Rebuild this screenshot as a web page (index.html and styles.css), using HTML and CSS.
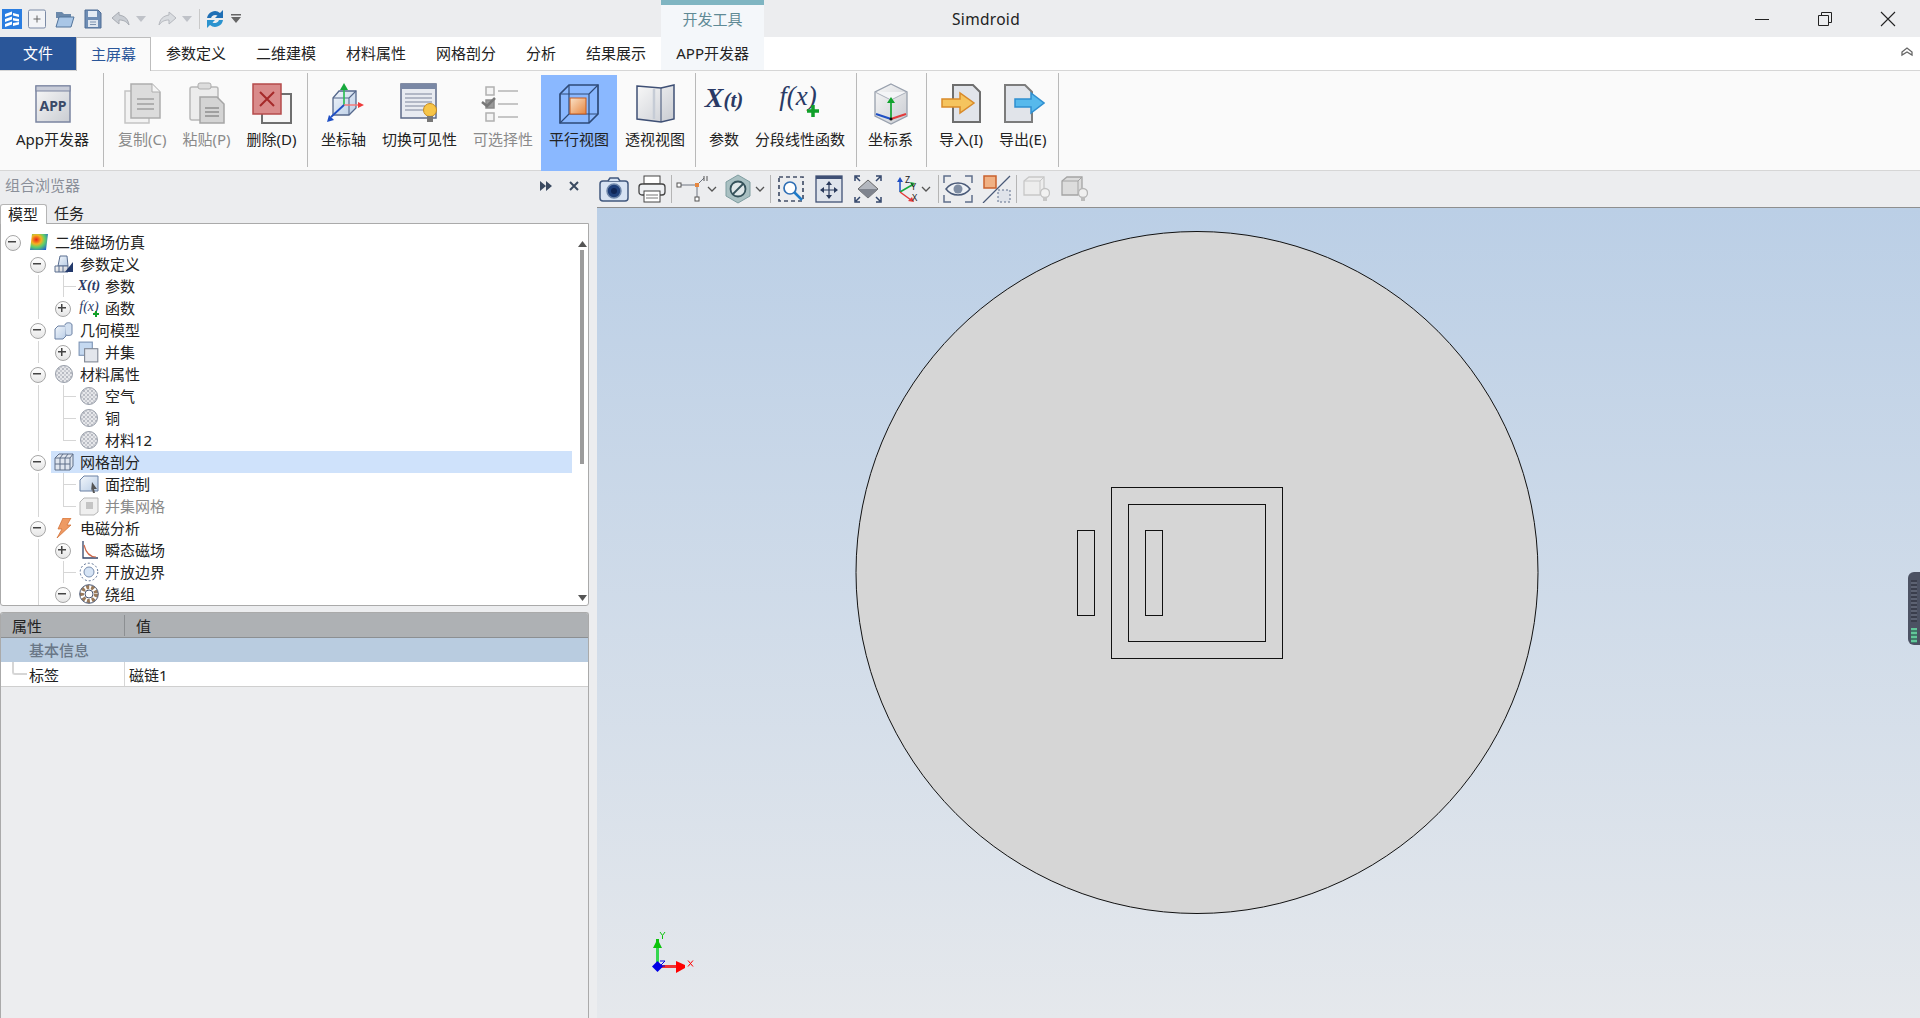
FILE: index.html
```html
<!DOCTYPE html>
<html lang="zh">
<head>
<meta charset="utf-8">
<title>Simdroid</title>
<link rel="stylesheet" href="styles.css">
</head>
<body>
<svg class="defs" width="0" height="0" aria-hidden="true">
  <defs>
    <linearGradient id="gBlue" x1="0" y1="0" x2="1" y2="1"><stop offset="0" stop-color="#f2f6fb"/><stop offset="1" stop-color="#b9cde6"/></linearGradient>
    <linearGradient id="gGray" x1="0" y1="0" x2="1" y2="1"><stop offset="0" stop-color="#f8f8f8"/><stop offset="1" stop-color="#c9ccd2"/></linearGradient>
    <linearGradient id="gOrange" x1="0" y1="0" x2="1" y2="1"><stop offset="0" stop-color="#fbe3c8"/><stop offset="1" stop-color="#e6853f"/></linearGradient>
    <radialGradient id="gHeat" cx="0.35" cy="0.35" r="0.8"><stop offset="0" stop-color="#e8231c"/><stop offset="0.35" stop-color="#f5b21f"/><stop offset="0.6" stop-color="#5fd06a"/><stop offset="1" stop-color="#1f5fd0"/></radialGradient>
    <pattern id="pDots" width="4" height="4" patternUnits="userSpaceOnUse"><rect width="4" height="4" fill="#e6e7ea"/><circle cx="1" cy="1" r="1" fill="#a9adb6"/><circle cx="3" cy="3" r="1" fill="#bfc2c9"/></pattern>
    <symbol id="sphere" viewBox="0 0 20 20"><circle cx="10" cy="10" r="8.5" fill="url(#pDots)" stroke="#9aa0ab"/></symbol>
    <symbol id="chev" viewBox="0 0 12 12"><path d="M2 4l4 4 4-4" fill="none" stroke="#555" stroke-width="1.3"/></symbol>
  </defs>
</svg>

<header class="titlebar">
  <div class="quick">
    <svg class="q q-first" width="20" height="20" viewBox="0 0 20 20"><rect width="20" height="20" fill="#2a7de1"/><path d="M3 5l7-2.5v3L3 8zM3 10l7-2.5v3L3 13zM3 15l7-2.5v3L3 18zM11 4l6 1.5v2.500L11 6.500zM11 9l6 1v2.500l-6-1zM11 14l6-1v2.500l-6 1.500z" fill="#fff"/></svg>
    <svg class="q" width="20" height="20" viewBox="0 0 20 20"><rect x="1.500" y="1" width="17" height="18" rx="1.500" fill="#f3f4f7" stroke="#7c8ba6"/><path d="M6.500 10h7M10 6.500v7" stroke="#666" fill="none"/></svg>
    <svg class="q" width="20" height="20" viewBox="0 0 20 20"><path d="M1 3h6l2 2h7v4H1z" fill="#6b89ab"/><path d="M1 18l3-10h15l-3 10z" fill="#a9c6e6" stroke="#52749b"/></svg>
    <svg class="q" width="20" height="20" viewBox="0 0 20 20"><path d="M2 1h13l3 3v15H2z" fill="#6e8db5" stroke="#4f6c94"/><rect x="5" y="2" width="9" height="6" fill="#e4ebf4"/><rect x="5" y="11" width="10" height="7" fill="#dfe6ef"/><path d="M7 13h6M7 15.500h6" stroke="#7d93b0"/></svg>
    <svg class="q" width="20" height="20" viewBox="0 0 20 20"><path d="M8 3L1 9l7 6v-4c4 0 7 1 10 5-1-6-4-9-10-10z" fill="#c9cdd3" stroke="#a8acb3"/></svg>
    <svg class="qa" width="10" height="6" viewBox="0 0 10 6"><path d="M0 0h10L5 6z" fill="#bfc2c8"/></svg>
    <svg class="q" width="20" height="20" viewBox="0 0 20 20"><path d="M12 3l7 6-7 6v-4C8 11 5 12 2 16c1-6 4-9 10-10z" fill="#d9dce0" stroke="#b5b8be"/></svg>
    <svg class="qa" width="10" height="6" viewBox="0 0 10 6"><path d="M0 0h10L5 6z" fill="#bfc2c8"/></svg>
    <span class="qsep"></span>
    <svg class="q" width="20" height="20" viewBox="0 0 20 20"><path d="M2 9a8 8 0 0 1 13-5L18 1v8h-8l2.500-2.500A4.500 4.500 0 0 0 6 9z" fill="#1f6fb5"/><path d="M18 11a8 8 0 0 1-13 5l-3 3v-8h8l-2.500 2.500A4.500 4.500 0 0 0 14 11z" fill="#2b93cf"/></svg>
    <svg class="qm" width="10" height="9" viewBox="0 0 10 9"><path d="M0 0h10v1.500H0zM0 3h10L5 9z" fill="#666"/></svg>
  </div>
  <div class="ctx-head"><span>开发工具</span></div>
  <div class="app-title">Simdroid</div>
  <div class="win">
    <svg width="16" height="16" viewBox="0 0 16 16"><path d="M1 8.500h14" stroke="#222" fill="none"/></svg>
    <svg width="16" height="16" viewBox="0 0 16 16"><path d="M1.500 4.500h10v10h-10zM4.500 4.500v-3h10v10h-3" stroke="#222" fill="none"/></svg>
    <svg width="16" height="16" viewBox="0 0 16 16"><path d="M1 1l14 14M15 1L1 15" stroke="#222" fill="none" stroke-width="1.100"/></svg>
  </div>
</header>

<nav class="tabs">
  <div class="tab file">文件</div>
  <div class="tab active">主屏幕</div>
  <div class="tab">参数定义</div>
  <div class="tab">二维建模</div>
  <div class="tab">材料属性</div>
  <div class="tab">网格剖分</div>
  <div class="tab">分析</div>
  <div class="tab">结果展示</div>
  <div class="tab ctx">APP开发器</div>
  <svg class="collapse" width="14" height="12" viewBox="0 0 14 12"><path d="M2 6l5-4 5 4v3L7 6 2 9z" fill="none" stroke="#666" stroke-width="1.300"/></svg>
</nav>

<section class="ribbon">
  <div class="group g-app">
    <div class="rb">
      <svg width="44" height="44" viewBox="0 0 44 44"><rect x="5" y="5" width="34" height="36" fill="url(#gGray)" stroke="#7a84a0" stroke-width="1.500"/><rect x="5" y="5" width="34" height="5" fill="#c8ccd8" stroke="#7a84a0"/><text x="22" y="30" class="svg-app">APP</text></svg>
      <span>App开发器</span>
    </div>
  </div>
  <div class="group g-edit">
    <div class="rb off">
      <svg width="44" height="44" viewBox="0 0 44 44"><path d="M5 10h24v32H5z" fill="#f2f2f2" stroke="#c4c4c4" stroke-width="1.500"/><path d="M11 3h21l8 8v26H11z" fill="#dcdcdc" stroke="#adadad" stroke-width="1.500"/><path d="M32 3v8h8" fill="#f5f5f5" stroke="#adadad"/><path d="M17 18h17M17 23h17M17 28h17" stroke="#a0a0a0" stroke-width="1.500"/></svg>
      <span>复制(C)</span>
    </div>
    <div class="rb off">
      <svg width="44" height="44" viewBox="0 0 44 44"><rect x="5" y="6" width="28" height="33" rx="2" fill="#ececec" stroke="#b8b8b8" stroke-width="1.500"/><rect x="13" y="2" width="13" height="6" rx="2" fill="#dcdcdc" stroke="#adadad"/><path d="M15 16h17l7 7v19H15z" fill="#d4d4d4" stroke="#a5a5a5" stroke-width="1.500"/><path d="M20 27h14M20 31h14M20 35h14" stroke="#8f8f8f" stroke-width="1.300"/></svg>
      <span>粘贴(P)</span>
    </div>
    <div class="rb">
      <svg width="44" height="44" viewBox="0 0 44 44"><rect x="12" y="13" width="29" height="29" fill="#f6f6f6" stroke="#6f6f6f" stroke-width="2"/><rect x="3" y="3" width="28" height="30" fill="#d98b8b" stroke="#b54b4b" stroke-width="1.500"/><path d="M10 11l14 14M24 11L10 25" stroke="#a52a2a" stroke-width="2" fill="none"/></svg>
      <span>删除(D)</span>
    </div>
  </div>
  <div class="group g-view">
    <div class="rb">
      <svg width="44" height="44" viewBox="0 0 44 44"><path d="M11 17l6-7h17v17l-7 7H11z" fill="url(#gBlue)" stroke="#55688c" stroke-width="1.300"/><path d="M11 17h16v17M27 17l7-7" fill="none" stroke="#55688c" stroke-width="1.100"/><path d="M22 24V8" stroke="#2fbf57" stroke-width="1.700"/><path d="M18 9l4-7 4 7z" fill="#16a83c"/><path d="M22 24h14" stroke="#f47a7a" stroke-width="1.500"/><path d="M36 21l6 3-6 3z" fill="#ee3b3b"/><path d="M22 24L9 36" stroke="#1f4fc4" stroke-width="1.800"/><path d="M5 41l2-7 5 5z" fill="#1f4fc4"/></svg>
      <span>坐标轴</span>
    </div>
    <div class="rb">
      <svg width="44" height="44" viewBox="0 0 44 44"><rect x="3" y="3" width="35" height="34" fill="#e8ebf1" stroke="#5c6a88" stroke-width="1.500"/><rect x="3" y="3" width="35" height="5" fill="#7a88a5"/><path d="M7 13h27M7 17h27M7 21h27M7 25h20M7 29h18" stroke="#a0a8b8" stroke-width="1.300"/><circle cx="32" cy="29" r="6.500" fill="#f7c548" stroke="#c48a1f"/><rect x="29" y="35" width="6" height="6" fill="#777"/></svg>
      <span>切换可见性</span>
    </div>
    <div class="rb off">
      <svg width="44" height="44" viewBox="0 0 44 44"><rect x="5" y="6" width="8" height="8" fill="#f4f4f4" stroke="#b0b0b0" stroke-width="1.500"/><rect x="5" y="19" width="8" height="8" fill="#9a9a9a" stroke="#8a8a8a" stroke-width="1.500"/><rect x="5" y="32" width="8" height="8" fill="#f4f4f4" stroke="#b0b0b0" stroke-width="1.500"/><path d="M1 21l5 4 8-8" fill="none" stroke="#777" stroke-width="2.500"/><path d="M17 10h20M17 23h20M17 36h20" stroke="#b5b5b5" stroke-width="1.500"/></svg>
      <span>可选择性</span>
    </div>
    <div class="rb sel">
      <svg width="44" height="44" viewBox="0 0 44 44"><path d="M3 13l9-9h29v29l-9 9H3z" fill="none" stroke="#2e4a78" stroke-width="1.700"/><path d="M3 13h29v29M32 13l9-9M12 4v29h29M3 42l9-9" fill="none" stroke="#2e4a78" stroke-width="1.200"/><rect x="13" y="17" width="16" height="16" fill="url(#gOrange)" stroke="#c65a1e"/></svg>
      <span>平行视图</span>
    </div>
    <div class="rb">
      <svg width="44" height="44" viewBox="0 0 44 44"><path d="M4 5l24 2 13-3v34l-13 3-24-3z" fill="url(#gGray)" stroke="#3f5075" stroke-width="1.500"/><path d="M28 7v34" fill="none" stroke="#3f5075" stroke-width="1"/><path d="M21 8v30" stroke="#c6ccd6" stroke-width="2.500"/></svg>
      <span>透视视图</span>
    </div>
  </div>
  <div class="group g-par">
    <div class="rb tight">
      <svg width="44" height="44" viewBox="0 0 44 44"><text x="22" y="26" class="svg-xt">X<tspan class="svg-xt2">(t)</tspan></text></svg>
      <span>参数</span>
    </div>
    <div class="rb">
      <svg width="44" height="44" viewBox="0 0 44 44"><text x="20" y="24" class="svg-fx">f(x)</text><path d="M29 30h12M35 24v12" stroke="#10a02a" stroke-width="3.500"/></svg>
      <span>分段线性函数</span>
    </div>
  </div>
  <div class="group g-cs">
    <div class="rb">
      <svg width="44" height="44" viewBox="0 0 44 44"><path d="M22 3l16 8v24l-16 8-16-8V11z" fill="url(#gGray)" stroke="#98a0ad" stroke-width="1.300"/><path d="M6 11l16 8 16-8" fill="#f4f5f7" stroke="#aab0bb"/><path d="M22 37V20" stroke="#11a32e" stroke-width="1.700"/><path d="M18 22l4-6 4 6z" fill="#11a32e"/><path d="M22 38L7 33" stroke="#1f4fc4" stroke-width="2"/><path d="M22 38l15-5" stroke="#e23a3a" stroke-width="2"/><circle cx="22" cy="38" r="1.500" fill="#111"/></svg>
      <span>坐标系</span>
    </div>
  </div>
  <div class="group g-io">
    <div class="rb">
      <svg width="44" height="44" viewBox="0 0 44 44"><path d="M14 4h20l7 7v30H14z" fill="#e1e4ea" stroke="#6e6e6e" stroke-width="2"/><path d="M3 18h18v-6l14 10-14 10v-6H3z" fill="#f5c45e" stroke="#d98a2a" stroke-width="1.500"/></svg>
      <span>导入(I)</span>
    </div>
    <div class="rb">
      <svg width="44" height="44" viewBox="0 0 44 44"><path d="M4 4h20l7 7v30H4z" fill="#e1e4ea" stroke="#7c7c7c" stroke-width="2"/><path d="M14 18h16v-6l13 10-13 10v-6H14z" fill="#57b9ec" stroke="#2f8fd0" stroke-width="1.500"/></svg>
      <span>导出(E)</span>
    </div>
  </div>
</section>

<main class="main">
  <aside class="side">
    <div class="side-head">
      <span>组合浏览器</span>
      <div class="side-tools">
        <svg width="12" height="12" viewBox="0 0 12 12"><path d="M0 1l6 5-6 5zM6 1l6 5-6 5z" fill="#3a4a60"/></svg>
        <svg width="12" height="12" viewBox="0 0 12 12"><path d="M2 2l8 8M10 2l-8 8" stroke="#3a4a60" stroke-width="2"/></svg>
      </div>
    </div>
    <div class="side-tabs"><span class="stab on">模型</span><span class="stab">任务</span></div>
    <div class="tree-box">
      <div class="tree">
        <div class="row"><i class="c minus"></i><div class="lbl"><svg class="ti" width="22" height="20" viewBox="0 0 20 20"><path d="M3 2h16l-2 16H1z" fill="url(#gHeat)"/></svg><span>二维磁场仿真</span></div></div>
        <div class="row"><i class="c"></i><i class="c minus"></i><div class="lbl"><svg class="ti" width="22" height="20" viewBox="0 0 20 20"><path d="M6 2h7l1 10H4z" fill="url(#gBlue)" stroke="#5a6e90"/><path d="M1 12h13v6H1z" fill="url(#gGray)" stroke="#5a6e90"/><path d="M5 12v6M9 12v6" stroke="#5a6e90"/><path d="M19 8v10H11z" fill="#22396b"/></svg><span>参数定义</span></div></div>
        <div class="row"><i class="c"></i><i class="c v"></i><i class="c t"></i><div class="lbl"><svg class="ti" width="22" height="20" viewBox="0 0 22 20"><text x="11" y="14" class="svg-xt-s">X(t)</text></svg><span>参数</span></div></div>
        <div class="row"><i class="c"></i><i class="c v"></i><i class="c plus"></i><div class="lbl"><svg class="ti" width="22" height="20" viewBox="0 0 22 20"><text x="11" y="13" class="svg-fx-s">f(x)</text><path d="M15 16h6M18 13v6" stroke="#10a02a" stroke-width="2"/></svg><span>函数</span></div></div>
        <div class="row"><i class="c"></i><i class="c minus"></i><div class="lbl"><svg class="ti" width="22" height="20" viewBox="0 0 20 20"><path d="M1 9l3-3h8v10l-3 3H1z" fill="url(#gBlue)" stroke="#6a80a3"/><path d="M11 5c0-3 7-3 7 0v9c0 1-3 2-6 1" fill="#d3e0f0" stroke="#6a80a3"/></svg><span>几何模型</span></div></div>
        <div class="row"><i class="c"></i><i class="c v"></i><i class="c plus"></i><div class="lbl"><svg class="ti" width="22" height="22" viewBox="0 0 20 20"><rect x="1" y="1" width="12" height="12" fill="#c5d9f0" stroke="#7c93b4"/><rect x="6" y="7" width="12" height="12" fill="#e3e6ec" stroke="#808794"/></svg><span>并集</span></div></div>
        <div class="row"><i class="c"></i><i class="c minus"></i><div class="lbl"><svg class="ti" width="22" height="20"><use href="#sphere"/></svg><span>材料属性</span></div></div>
        <div class="row"><i class="c"></i><i class="c v"></i><i class="c t"></i><div class="lbl"><svg class="ti" width="22" height="20"><use href="#sphere"/></svg><span>空气</span></div></div>
        <div class="row"><i class="c"></i><i class="c v"></i><i class="c t"></i><div class="lbl"><svg class="ti" width="22" height="20"><use href="#sphere"/></svg><span>铜</span></div></div>
        <div class="row"><i class="c"></i><i class="c v"></i><i class="c l"></i><div class="lbl"><svg class="ti" width="22" height="20"><use href="#sphere"/></svg><span>材料12</span></div></div>
        <div class="row"><i class="c"></i><i class="c minus"></i><div class="lbl sel"><svg class="ti" width="22" height="20" viewBox="0 0 20 20"><path d="M1 6l4-4h14v12l-3 4H1z" fill="#dfe5ee" stroke="#5f6e88"/><path d="M1 6h15v12M16 6l3-4M6 6v12M11 6v12M1 12h15M9 2L6 6M14 2l-3 4" fill="none" stroke="#5f6e88"/></svg><span>网格剖分</span></div></div>
        <div class="row"><i class="c"></i><i class="c v"></i><i class="c t"></i><div class="lbl"><svg class="ti" width="22" height="20" viewBox="0 0 20 20"><path d="M1 6l4-4h14v15H1z" fill="url(#gBlue)" stroke="#6a80a3"/><path d="M13 8l5 7h-3l1 4-2 0-1-4-1 2z" fill="#555"/></svg><span>面控制</span></div></div>
        <div class="row off"><i class="c"></i><i class="c v"></i><i class="c l"></i><div class="lbl"><svg class="ti" width="22" height="20" viewBox="0 0 20 20"><path d="M1 6l4-4h14v14l-4 3H1z" fill="#efefef" stroke="#b5b5b5"/><rect x="7" y="6" width="7" height="7" fill="#c4c4c4"/></svg><span>并集网格</span></div></div>
        <div class="row"><i class="c"></i><i class="c minus"></i><div class="lbl"><svg class="ti" width="22" height="20" viewBox="0 0 20 20"><path d="M9 0h8l-4 7h4L3 20l5-9H4z" fill="#ee9a63" stroke="#cf6a2e" stroke-width=".7"/></svg><span>电磁分析</span></div></div>
        <div class="row"><i class="c"></i><i class="c v"></i><i class="c plus"></i><div class="lbl"><svg class="ti" width="22" height="20" viewBox="0 0 20 20"><path d="M4 1v17h15" fill="none" stroke="#34466a" stroke-width="1.300"/><path d="M5 5c2 8 6 12 12 12" fill="none" stroke="#d0694a" stroke-width="1.200"/></svg><span>瞬态磁场</span></div></div>
        <div class="row"><i class="c"></i><i class="c v"></i><i class="c t"></i><div class="lbl"><svg class="ti" width="22" height="20" viewBox="0 0 20 20"><circle cx="10" cy="10" r="5" fill="#d6e4f5" stroke="#7a8fb0"/><circle cx="10" cy="10" r="8.800" fill="none" stroke="#5a6e90" stroke-dasharray="2 2"/></svg><span>开放边界</span></div></div>
        <div class="row"><i class="c"></i><i class="c v"></i><i class="c minus"></i><div class="lbl"><svg class="ti" width="22" height="20" viewBox="0 0 20 20"><circle cx="10" cy="10" r="7" fill="none" stroke="#9a7a5a" stroke-width="4" stroke-dasharray="3 2"/><circle cx="10" cy="10" r="9.300" fill="none" stroke="#4a5670"/><circle cx="10" cy="10" r="4" fill="#fff" stroke="#4a5670"/></svg><span>绕组</span></div></div>
        <div class="row"><i class="c"></i><i class="c v"></i><i class="c v"></i><i class="c t"></i><div class="lbl"></div></div>
      </div>
      <div class="vscroll">
        <svg width="9" height="6" viewBox="0 0 9 6"><path d="M4.500 0L9 6H0z" fill="#555"/></svg>
        <div class="thumb"></div>
        <svg width="9" height="6" viewBox="0 0 9 6"><path d="M4.500 6L9 0H0z" fill="#555"/></svg>
      </div>
    </div>
    <div class="props">
      <div class="p-head"><span class="p-k">属性</span><span class="p-v">值</span></div>
      <div class="p-group">基本信息</div>
      <div class="p-row"><span class="p-k"><i class="p-guide"></i>标签</span><span class="p-v">磁链1</span></div>
    </div>
  </aside>

  <div class="stage">
    <div class="toolbar">
      <div class="tb"><svg width="30" height="28" viewBox="0 0 30 28"><rect x="1" y="6" width="28" height="20" rx="3" fill="#d7e3f3" stroke="#41587e" stroke-width="1.500"/><path d="M9 6l2-3h8l2 3" fill="#d7e3f3" stroke="#41587e" stroke-width="1.500"/><circle cx="15" cy="16" r="7" fill="#1e3f7a" stroke="#6f87aa" stroke-width="1.500"/><circle cx="15" cy="16" r="3" fill="#0f2554"/></svg></div>
      <div class="tb"><svg width="30" height="28" viewBox="0 0 30 28"><rect x="7" y="1" width="16" height="8" fill="#fff" stroke="#444"/><rect x="2" y="9" width="26" height="11" rx="3" fill="#eef0f3" stroke="#444" stroke-width="1.300"/><rect x="7" y="16" width="16" height="11" fill="#fff" stroke="#444"/><path d="M9 20h12M9 23h12" stroke="#777"/></svg></div>
      <span class="tsep"></span>
      <div class="tb-split sp1"><svg width="34" height="28" viewBox="0 0 34 28"><path d="M3 10h18M21 10V24M21 10L28 3" stroke="#6e7480" stroke-width="1" fill="none"/><rect x="1" y="8" width="4" height="4" fill="#fff" stroke="#555"/><rect x="19" y="22" width="4" height="4" fill="#fff" stroke="#555"/><rect x="19" y="8" width="4" height="4" fill="#e7873f"/><path d="M28 1v5M31 1v5" stroke="#555"/></svg><svg class="ch" width="12" height="12"><use href="#chev"/></svg></div>
      <div class="tb-split sp2"><svg width="28" height="30" viewBox="0 0 28 30"><path d="M14 1l12 7v14l-12 7-12-7V8z" fill="#a9c0c2" stroke="#7f9da0"/><circle cx="14" cy="15" r="7.500" fill="#dfe7e8" stroke="#35525a" stroke-width="1.800"/><path d="M9 20L19 10" stroke="#35525a" stroke-width="1.800"/></svg><svg class="ch" width="12" height="12"><use href="#chev"/></svg></div>
      <span class="tsep s2"></span>
      <div class="tb"><svg width="28" height="28" viewBox="0 0 28 28"><rect x="2" y="2" width="24" height="24" fill="none" stroke="#44506a" stroke-width="1.700" stroke-dasharray="4 3"/><circle cx="13" cy="13" r="6" fill="#fff" stroke="#2f6fb5" stroke-width="1.700"/><path d="M17 17l8 8" stroke="#1f7ac8" stroke-width="2.500"/></svg></div>
      <div class="tb"><svg width="28" height="28" viewBox="0 0 28 28"><rect x="1" y="1" width="26" height="26" fill="#dfe4ec" stroke="#3f5075" stroke-width="1.300"/><rect x="1" y="1" width="26" height="3" fill="#3f5075"/><path d="M14 8v15M7 15h14" stroke="#2a3a5c" stroke-width="1.200"/><path d="M14 6l-3 4h6zM14 24l-3-4h6zM5 15l4-3v6zM23 15l-4-3v6z" fill="#2a3a5c"/></svg></div>
      <div class="tb tb-fit"><svg width="28" height="28" viewBox="0 0 28 28"><path d="M14 5L24 14 14 23 4 14z" fill="#b3b7bf" stroke="#666"/><path d="M4 14h20L14 23z" fill="#7f848e"/><path d="M1 6V1h5M2 2l4 4M27 6V1h-5M26 2l-4 4M1 22v5h5M2 26l4-4M27 22v5h-5M26 26l-4-4" fill="none" stroke="#33466b" stroke-width="1.500"/></svg></div>
      <div class="tb-split sp3"><svg width="28" height="28" viewBox="0 0 28 28"><path d="M8 17V6" stroke="#1f4fc4" stroke-width="1.500"/><path d="M5 7l3-5 3 5z" fill="#1f4fc4"/><path d="M8 17l12-7" stroke="#16a83c" stroke-width="1.500"/><path d="M18 7l5 1-3 4z" fill="#16a83c"/><path d="M8 17l11 8" stroke="#e23a3a" stroke-width="1.500"/><path d="M20 22l2 5-6-1z" fill="#e23a3a"/><text x="13" y="8" class="svg-axis">Z</text><text x="19" y="15" class="svg-axis">Y</text><text x="20" y="26" class="svg-axis x2">X</text></svg><svg class="ch" width="12" height="12"><use href="#chev"/></svg></div>
      <span class="tsep s3"></span>
      <div class="tb tb-eye"><svg width="30" height="28" viewBox="0 0 30 28"><path d="M1 8V1h7M22 1h7v7M29 20v7h-7M8 27H1v-7" fill="none" stroke="#5f6f8c" stroke-width="1.500"/><path d="M3 14c6-8 18-8 24 0-6 8-18 8-24 0z" fill="#eef1f5" stroke="#4a5a78" stroke-width="1.500"/><circle cx="15" cy="14" r="4.500" fill="#7f8da3"/></svg></div>
      <div class="tb"><svg width="30" height="28" viewBox="0 0 30 28"><rect x="2" y="1" width="12" height="12" fill="#f0b184" stroke="#c9622e" stroke-width="1.500"/><path d="M28 1L1 28" stroke="#4a5a78" stroke-width="1.200"/><rect x="16" y="15" width="12" height="12" fill="#dfe3ea" stroke="#5f6f8c" stroke-dasharray="2 2"/></svg></div>
      <span class="tsep s4"></span>
      <div class="tb"><svg width="28" height="30" viewBox="0 0 28 30"><path d="M2 7l5-4h15v14l-4 4H2z" fill="#ededed" stroke="#c7c7c7" stroke-width="1.300"/><path d="M2 7h16v14M18 7l4-4" fill="none" stroke="#c7c7c7"/><circle cx="23" cy="19" r="4.500" fill="#f2f2f2" stroke="#c2c2c2" stroke-width="1.300"/><rect x="21" y="23" width="4" height="4" fill="#c7c7c7"/></svg></div>
      <div class="tb"><svg width="28" height="30" viewBox="0 0 28 30"><path d="M2 7l5-4h15v14l-4 4H2z" fill="#dcdcdc" stroke="#a4a4a4" stroke-width="1.300"/><path d="M2 7h16v14M18 7l4-4" fill="none" stroke="#a4a4a4"/><circle cx="23" cy="19" r="4.500" fill="#f0f0f0" stroke="#b5b5b5" stroke-width="1.300"/><rect x="21" y="23" width="4" height="4" fill="#bcbcbc"/></svg></div>
    </div>
    <div class="viewport">
      <svg class="scene" viewBox="597 208 1323 810" preserveAspectRatio="none">
        <circle cx="1197" cy="572.500" r="341" fill="#d6d6d6" stroke="#111" stroke-width="1"/>
        <g fill="none" stroke="#111" stroke-width="1">
          <rect x="1111.500" y="487.500" width="171" height="171"/>
          <rect x="1128.500" y="504.500" width="137" height="137"/>
          <rect x="1077.500" y="530.500" width="17" height="85"/>
          <rect x="1145.500" y="530.500" width="17" height="85"/>
        </g>
        <g>
          <path d="M657.500 966V945" stroke="#35d650" stroke-width="3"/>
          <path d="M653 948h9l-3-6v-3h-3v3z" fill="#0cc30c"/>
          <path d="M659 966.500h24" stroke="#f03030" stroke-width="3"/>
          <path d="M676 961v12l9-5v-3z" fill="#f00"/>
          <path d="M657.500 961l5.500 5.500-5.500 5.500-5.500-5.500z" fill="#0000e6"/>
          <path d="M660 961h5l-5 5h5" stroke="#0000e6" fill="none"/>
          <path d="M660 932l2.500 3.500 2.500-3.500M662.500 935.500v3.500" stroke="#0cc30c" fill="none"/>
          <path d="M688 960.500l5 6M693 960.500l-5 6" stroke="#f00" fill="none"/>
        </g>
      </svg>
      <div class="handle"><div class="grip"></div><div class="grip-on"></div></div>
    </div>
  </div>
</main>
</body>
</html>
```

FILE: styles.css
```css
* { box-sizing: border-box; }
html, body { margin: 0; height: 100%; overflow: hidden; }
body {
  width: 1920px; height: 1018px;
  font-family: "Noto Sans", "Noto Sans CJK SC", sans-serif;
  font-size: 15px; color: #222; background: #ecedef;
  display: flex; flex-direction: column;
}
svg { display: block; flex: none; }
.defs { position: absolute; }

/* title bar */
.titlebar { height: 37px; display: flex; background: #ecedef; flex: none; }
.quick { width: 661px; display: flex; align-items: center; padding-left: 2px; }
.q { margin-right: 8px; }
.q-first { margin-right: 5px; }
.qa { margin: 0 11px 0 -3px; }
.qsep { width: 1px; height: 20px; background: #c9c9c9; margin: 0 5px 0 -4px; }
.qm { margin-left: -2px; }
.ctx-head { width: 103px; border-top: 5px solid #7fb5c2; background: #f4f7fa; display: flex; align-items: center; justify-content: center; color: #5f8a95; font-size: 15px; padding-bottom: 5px; }
.app-title { width: 444px; text-align: center; line-height: 39px; font-size: 15.500px; letter-spacing: .3px; }
.win { margin-left: auto; display: flex; align-items: center; gap: 47px; padding-right: 24px; }

/* tabs */
.tabs { height: 33px; background: #fff; display: flex; align-items: stretch; flex: none; position: relative; }
.tab { padding: 0 15px; line-height: 32px; font-size: 15px; }
.tab.file { width: 76px; text-align: center; padding: 0; background: #2a5699; color: #fff; }
.tab.active { color: #2a5699; background: #fafafa; border: 1px solid #bdbdbd; border-bottom: none; padding: 0 14px; width: 75px; position: relative; z-index: 1; height: 34px; }
.tab.ctx { background: #f4f7fa; width: 103px; padding: 0; text-align: center; }
.collapse { margin: 9px 6px 0 auto; }

/* ribbon */
.ribbon { height: 101px; flex: none; display: flex; background: #fafafa; border-top: 1px solid #d6d6d6; border-bottom: 1px solid #d6d6d6; }
.group { display: flex; height: 94px; margin-top: 2px; border-right: 1px solid #b9b9b9; padding: 0 2px 0 6px; flex: none; }
.g-app { padding-left: 8px; width: 104px; }
.g-edit { width: 204px; }
.g-view { width: 388px; padding: 0 0 0 5px; }
.g-par { width: 161px; padding-left: 5px; }
.g-cs { width: 70px; padding-left: 3px; }
.g-io { width: 132px; padding-left: 4px; }
.rb { display: flex; flex-direction: column; align-items: center; padding: 6px 8px 0; height: 96px; margin-top: 2px; white-space: nowrap; flex: none; }
.rb svg { margin-bottom: 4px; }
.rb span { line-height: 20px; }
.rb.off span { color: #8a8a8a; }
.rb.sel { background: #8ab8ff; }
.rb.tight { padding: 6px 0 0; width: 46px; }
.svg-app { font: bold 14px "Noto Sans", sans-serif; fill: #3a4a68; text-anchor: middle; }
.svg-xt { font: italic bold 28px "Liberation Serif", serif; fill: #2a3a66; text-anchor: middle; }
.svg-xt2 { font-size: 21px; }
.svg-fx { font: italic 27px "Liberation Serif", serif; fill: #2a3a66; text-anchor: middle; }
.svg-xt-s { font: italic bold 14px "Liberation Serif", serif; fill: #2a3a66; text-anchor: middle; }
.svg-fx-s { font: italic 14px "Liberation Serif", serif; fill: #2a3a66; text-anchor: middle; }
.svg-axis { font: 9px "Noto Sans", sans-serif; fill: #222; }

/* layout */
.main { flex: 1; display: flex; min-height: 0; }
.side { width: 595px; padding: 0 6px 0 0; display: flex; flex-direction: column; flex: none; }
.side-head { height: 33px; display: flex; align-items: center; justify-content: space-between; padding: 0 9px 6px 5px; color: #8a8f99; }
.side-tools { display: flex; gap: 16px; margin-top: 3px; }
.side-tabs { height: 19px; display: flex; flex: none; }
.stab { padding: 0 8px 0 7px; line-height: 19px; width: 47px; }
.stab.on { background: #fff; border: 1px solid #b5b5b5; border-bottom: none; border-radius: 3px 3px 0 0; height: 20px; position: relative; z-index: 1; }
.tree-box { height: 383px; display: flex; background: #fff; border: 1px solid #aaa; border-radius: 0 0 3px 3px; flex: none; overflow: hidden; }
.tree { flex: 1; padding-top: 7px; overflow: hidden; }
.row { height: 22px; display: flex; align-items: stretch; line-height: 22px; margin-right: 1px; }
.row.off span { color: #8a8a8a; }
.c { width: 25px; flex: none; position: relative; }
.c.v::before, .c.t::before, .c.l::before { content: ""; position: absolute; left: 12px; top: 0; bottom: 0; width: 1px; background: #d6d6d6; }
.c.l::before { bottom: 10px; }
.c.t::after, .c.l::after { content: ""; position: absolute; left: 12px; top: 11px; width: 13px; height: 1px; background: #d6d6d6; }
.c.minus::before, .c.plus::before { content: ""; position: absolute; left: 4px; top: 4px; width: 14px; height: 14px; border: 1px solid #a6a6a6; border-radius: 50%; background: linear-gradient(#fff, #e6e6e6); }
.c.minus::after, .c.plus::after { content: ""; position: absolute; left: 7px; top: 7px; width: 8px; height: 8px; background: linear-gradient(#444, #444) center / 8px 1.500px no-repeat; }
.c.plus::after { background: linear-gradient(#444, #444) center / 8px 1.500px no-repeat, linear-gradient(#444, #444) center / 1.500px 8px no-repeat; }
.lbl { flex: 1; display: flex; align-items: center; }
.lbl.sel { background: #cfe2fb; }
.ti { margin: 0 5px 0 2px; }
.lbl span { line-height: 22px; }
.vscroll { width: 15px; flex: none; display: flex; flex-direction: column; align-items: center; padding: 17px 0 4px 3px; }
.thumb { width: 4px; height: 214px; background: #9c9c9c; margin-top: 3px; margin-bottom: auto; }

/* properties */
.props { flex: 1; margin-top: 6px; border: 1px solid #aaa; border-bottom: none; border-radius: 3px 3px 0 0; background: #ecedef; overflow: hidden; }
.p-head { height: 25px; background: #aeb1b4; display: flex; align-items: center; border-bottom: 1px solid #8c8f92; }
.p-group { height: 24px; background: #b9cce0; color: #6a7787; font-weight: 500; padding-left: 28px; line-height: 24px; }
.p-row { height: 25px; display: flex; background: #fff; border-bottom: 1px solid #cfcfcf; line-height: 26px; }
.p-k { width: 124px; padding-left: 11px; flex: none; border-right: 1px solid #8c8f92; position: relative; }
.p-row .p-k { padding-left: 28px; border-right-color: #d6d6d6; }
.p-v { padding-left: 11px; }
.p-row .p-v { padding-left: 4px; font-size: 15px; }
.p-guide { position: absolute; left: 11px; top: 0; width: 15px; height: 13px; border-left: 2px solid #d6d6d6; border-bottom: 2px solid #d6d6d6; border-radius: 0 0 0 3px; }

/* stage */
.stage { flex: 1; display: flex; flex-direction: column; min-width: 0; }
.toolbar { height: 36px; display: flex; align-items: center; flex: none; }
.tb { width: 38px; height: 36px; display: flex; align-items: center; justify-content: center; flex: none; }
.tb-fit { margin-left: 1px; }
.tb-eye { margin-right: 1px; }
.tb-split { display: flex; align-items: center; flex: none; }
.tb-split .ch { margin-left: -4px; }
.sp1 { margin-left: 3px; }
.sp2 { margin-left: 6px; }
.sp2 svg.ch { margin-left: 2px; }
.sp3 { margin-left: 5px; }
.sp3 svg.ch { margin-left: 0; }
.tsep { width: 1px; height: 28px; background: #b5b5b5; flex: none; margin: 0 1px 0 0; }
.s2 { margin-left: 4px; }
.s3 { margin-left: 6px; margin-right: 0; }
.s4 { margin-left: 0; margin-right: 0; }
.viewport { flex: 1; margin-left: 2px; position: relative; border-top: 1px solid #8f8f8f; background: linear-gradient(#bbcfe6, #e5e8ec); overflow: hidden; }
.scene { width: 100%; height: 100%; }
.handle { position: absolute; right: 0; top: 364px; width: 12px; height: 73px; background: #4c5263; border-radius: 6px 0 0 6px; padding: 8px 3px; }
.grip { height: 42px; background: repeating-linear-gradient(#3a3e4c 0 2px, #5c6272 2px 4px); }
.grip-on { height: 15px; margin-top: 6px; background: repeating-linear-gradient(#62c79a 0 2px, #3f7d6a 2px 4px); }
```
